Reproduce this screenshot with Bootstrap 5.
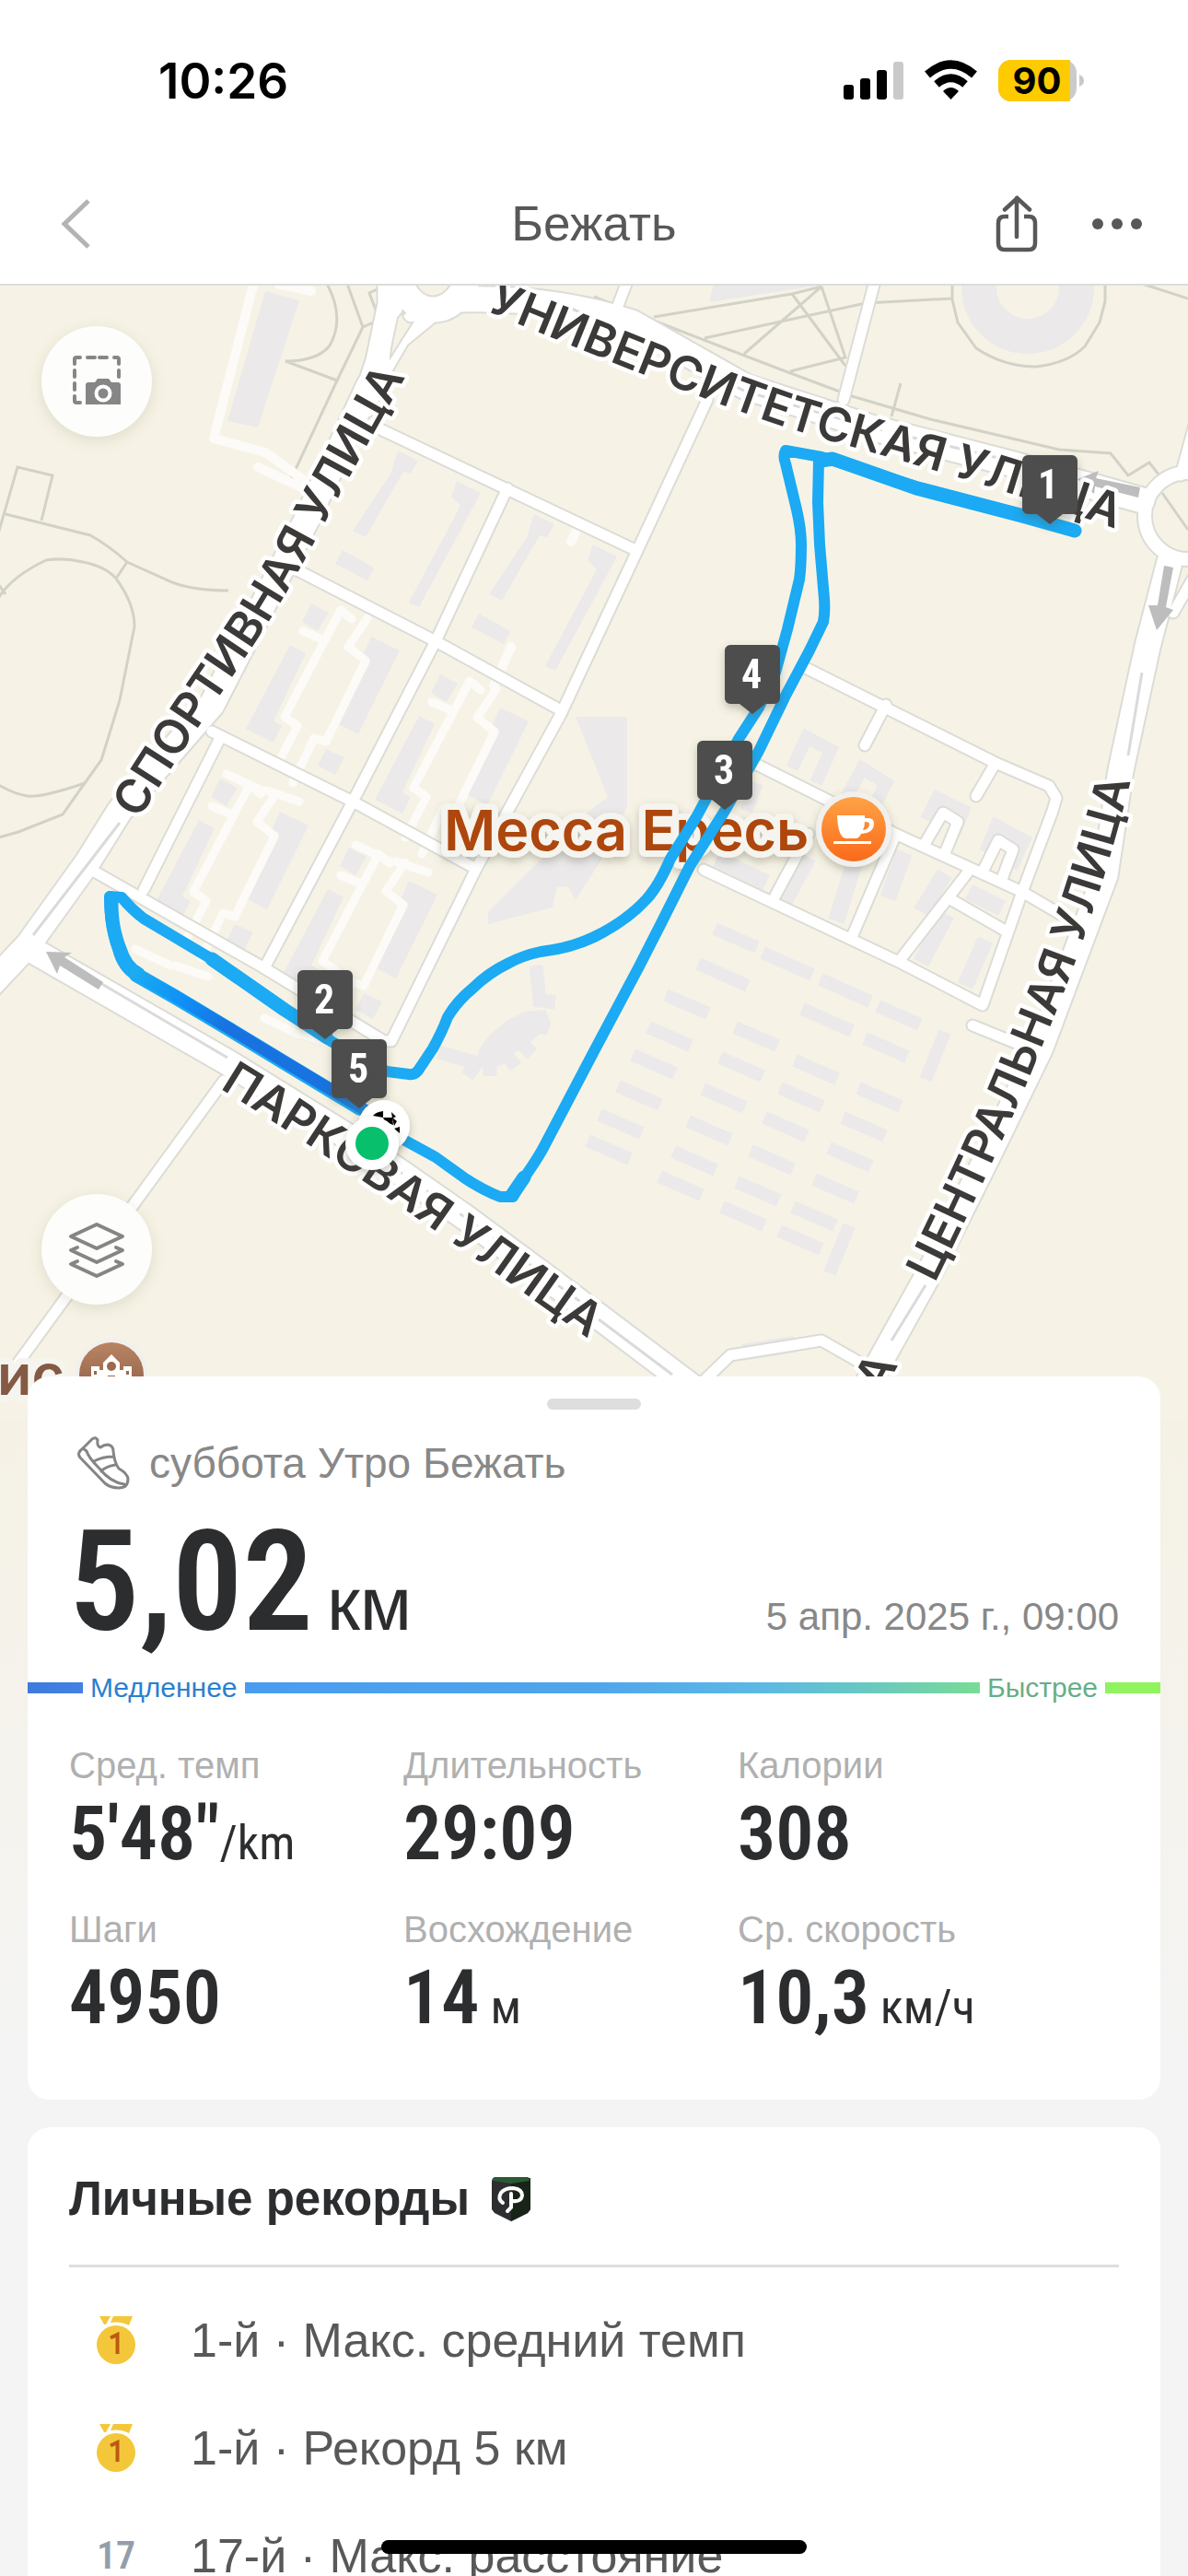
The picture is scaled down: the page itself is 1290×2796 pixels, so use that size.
<!DOCTYPE html>
<html lang="ru">
<head>
<meta charset="utf-8">
<meta name="viewport" content="width=device-width, initial-scale=1">
<title>Бежать</title>
<link href="https://cdn.jsdelivr.net/npm/bootstrap@5.3.0/dist/css/bootstrap.min.css" rel="stylesheet">
<style>
  body { font-family: "Liberation Sans", Arial, sans-serif; color: #2c2d2f; background: #f4f4f4; }
  .screen { height: 100vh; background: linear-gradient(#f5f1e4 0, #f5f1e4 54%, #f4f4f4 80%); }
  .status { height: 176px; padding: 0 112px 0 172px; }
  .clock { font: 600 53px/60px Inter, sans-serif; color: #000; }
  .topbar { height: 134px; padding: 2px 41px 0 58px; border-bottom: 2px solid #dcdcdc !important; }
  .topbar .btn { border: 0; line-height: 0; }
  .tools { gap: 42px; }
  .screen-title { font-size: 53px; line-height: 60px; color: #585858; }
  .map-svg { width: 100%; height: auto; }
  .map-btn { left: 45px; width: 120px; height: 120px; background: #fdfdfb; box-shadow: 0 4px 16px rgba(110,100,60,.16); }
  .map-btn:hover { background: #fff; }
  .map-btn-top { top: 44px; }
  .map-btn-low { bottom: 124px; }
  .sheets { margin: -46px 30px 0; gap: 30px; }
  .sheet { border: 0; border-radius: 24px; }
  .grip { width: 102px; height: 12px; border-radius: 6px; background: #dedede; margin-top: 24px; }
  .px { padding-left: 45px; padding-right: 45px; }
  .kind { font-size: 46px; line-height: 60px; color: #888; margin-top: 28px; gap: 21px; padding-left: 8px; }
  .cond { font-family: "Roboto Condensed", "Liberation Sans Narrow", "Arial Narrow", "Liberation Sans", sans-serif; font-weight: 600; }
  .total { font-size: 152px; line-height: 198px; }
  .total-unit { font-size: 82px; line-height: 80px; margin-left: 15px; }
  .when { font-size: 42px; line-height: 50px; color: #888; }
  .pace-bar { height: 12px; margin-top: 10px; background: linear-gradient(90deg, #3f7ade 0, #4a9cf0 20%, #50a6ec 50%, #5cb9e4 65%, #72d3a8 80%, #90f45f 96%); }
  .pace-bar span { font-size: 30px; line-height: 36px; padding: 0 8px; background: #fff; }
  .slow { color: #2a80cf; margin-left: 60px; }
  .fast { color: #67ae86; margin-right: 60px; }
  .stats { margin-top: 50px; padding-bottom: 65px; row-gap: 30px; }
  .stat { width: 363px; }
  .stat-name { font-size: 40px; line-height: 56px; color: #b0b0b0; font-weight: 400; }
  .stat-value { font-size: 82px; line-height: 92px; }
  .stat-unit { font-size: 52px; line-height: 50px; }
  .records-title { font-size: 51px; line-height: 60px; }
  .records-head { padding-top: 48px; padding-bottom: 41px; gap: 24px; }
  .sheet > .rule { margin: 0 45px; border-top: 3px solid #dedede; opacity: 1; }
  .records { padding-top: 20px; }
  .record { height: 117px; font-size: 52px; color: #585858; text-decoration: none; }
  .place { width: 72px; margin-left: 15px; margin-right: 45px; line-height: 0; }
  .place-num { font-size: 42px; line-height: 60px; color: #949eab; }
  .home { left: 50%; bottom: 24px; width: 462px; height: 15px; margin-left: -231px; border-radius: 8px; background: #000; }
  .lbl { font: 600 51px Inter, sans-serif; fill: #3c3a39; stroke: #fff; stroke-width: 9; paint-order: stroke; stroke-linejoin: round; }
  .poi { font: 600 61px Inter, sans-serif; stroke: #f6f4ee; stroke-width: 14; paint-order: stroke; stroke-linejoin: round; }
  .pin-n { font: 700 44px "Roboto Condensed", "Liberation Sans Narrow", "Liberation Sans", sans-serif; fill: #fff; text-anchor: middle; }
</style>
<script src="https://cdn.jsdelivr.net/npm/bootstrap@5.3.0/dist/js/bootstrap.bundle.min.js" defer></script>
</head>
<body>
<div class="screen overflow-hidden position-relative">
  <header class="bg-white">
    <div class="status d-flex justify-content-between align-items-center">
      <span class="clock">10:26</span>
      <svg width="262" height="46" viewBox="916 64 262 46" role="img" aria-label="Связь и батарея 90">
        <rect x="916" y="91" width="11" height="16" rx="3"/><rect x="934" y="84" width="11" height="23" rx="3"/><rect x="952" y="75" width="11" height="32" rx="3"/><rect x="970" y="66" width="11" height="41" rx="3" fill="#cacaca"/>
        <g fill="none" stroke="#000"><path d="M1007 80Q1032.500 58 1058 80" stroke-width="9"/><path d="M1017 90.500Q1032.500 77 1048 90.500" stroke-width="8.500"/></g>
        <path d="M1024 98Q1032.500 90 1041 98L1032.500 107Z"/>
        <rect x="1084" y="64" width="85" height="45" rx="14" fill="#cbcbcb"/><path d="M1098 64H1162V109H1098A14 14 0 0 1 1084 95V78A14 14 0 0 1 1098 64Z" fill="#fdcb00"/>
        <path d="M1172 80Q1177 82 1177 86.500T1172 93Z" fill="#c8c8c8"/>
        <text x="1126" y="101" text-anchor="middle" font-family="Inter, sans-serif" font-weight="700" font-size="40">90</text>
      </svg>
    </div>
    <nav class="topbar navbar flex-nowrap border-bottom position-relative justify-content-between">
      <button class="btn p-2" type="button" aria-label="Назад"><svg width="34" height="56" viewBox="0 0 34 56" fill="none" stroke="#b3b3b3" stroke-width="5"><path d="M30 3L4 28L30 53"/></svg></button>
      <h1 class="screen-title m-0 position-absolute start-50 translate-middle-x fw-normal">Бежать</h1>
      <div class="tools d-flex align-items-center">
        <button class="btn p-2" type="button" aria-label="Поделиться"><svg width="46" height="64" viewBox="1081 210 46 64" fill="none" stroke="#585858" stroke-width="4.500"><path d="M1095 234H1091Q1084 234 1084 241V263Q1084 270 1091 270H1117Q1124 270 1124 263V241Q1124 234 1117 234H1112"/><path d="M1104 256V214M1091 226.500L1104.500 214L1118 226.500" stroke-linecap="round"/></svg></button>
        <button class="btn p-2" type="button" aria-label="Ещё"><svg width="56" height="16" viewBox="0 0 56 16" fill="#585858"><circle cx="7" cy="8" r="6"/><circle cx="28" cy="8" r="6"/><circle cx="49" cy="8" r="6"/></svg></button>
      </div>
    </nav>
  </header>

  <section class="position-relative" aria-label="Карта маршрута">
    <svg class="map-svg d-block" viewBox="0 310 1290 1230">
      <defs>
        <linearGradient id="slowSeg" gradientUnits="userSpaceOnUse" x1="140" y1="1050" x2="400" y2="1210"><stop offset="0" stop-color="#1cb0f0"/><stop offset=".22" stop-color="#0f90f7"/><stop offset=".4" stop-color="#1873e0"/><stop offset=".85" stop-color="#1873e0"/><stop offset="1" stop-color="#1a8fe8"/></linearGradient>
        <linearGradient id="cafe" x1="0" y1="0" x2="0" y2="1"><stop offset="0" stop-color="#ffa245"/><stop offset="1" stop-color="#fa6a1a"/></linearGradient>
        <linearGradient id="school" x1="0" y1="0" x2="0" y2="1"><stop offset="0" stop-color="#b98463"/><stop offset="1" stop-color="#855840"/></linearGradient>
        <filter id="soft" x="-50%" y="-50%" width="200%" height="200%"><feDropShadow dx="0" dy="4" stdDeviation="5" flood-color="#554" flood-opacity=".35"/></filter>
        <path id="t1" d="M151 890C201 805 272 710 307 650S392 490 472 355"/>
        <path id="t2" d="M527 337C640 383 750 429 845 461C940 492 1080 523 1260 592"/>
        <path id="t3" d="M238 1181C380 1268 500 1355 680 1482"/>
        <path id="t4" d="M1015 1393C1060 1302 1100 1216 1150 1090C1180 1015 1205 940 1240 800"/>
        <path id="pin" d="M-30 -69A6 6 0 0 1 -24 -75H24A6 6 0 0 1 30 -69V-17A6 6 0 0 1 24 -11H14L0 0L-14 -11H-24A6 6 0 0 1 -30 -17Z"/>
        <g id="blk" fill="#ebe9ea"><path d="M315 700L332 709L297 783L306 788L297 806L267 791ZM403 691L434 706L389 797L368 786L402 719L393 713ZM338 655L357 665L345 685L328 675ZM354 813L374 822L364 841L345 831Z"/>
          <path fill="none" stroke="#fcfbf8" stroke-width="9" stroke-linecap="round" stroke-linejoin="round" d="M382 672L370 662L309 778L323 788L300 832M329 685L350 694M399 671L378 702L397 717L354 805L341 801L318 850M289 858L325 870M246 840L284 858"/></g>
        <g id="upr" fill="#ebe9ea"><path d="M432 489L454 500L446 514L438 512L397 583L383 576L424 514ZM496 522L522 535L455 659L444 654L500 549L490 539ZM372 597L406 616L399 630L364 612Z"/></g>
        <g id="roads" fill="none" stroke-linecap="round" stroke-linejoin="round">
          <path d="M411 465L690 597M321 618L473 696L609 771M230 794L383 870L517 943M99 944L284 1049L417 1130M768 434L690 602L609 775L517 943L425 1130L417 1130M551 530L473 696L383 870L288 1049M239 801L156 966M687 290L660 360M954 290L916 434"/>
          <path d="M875 725L1081 828L1139 853L1147 866L1143 880L1110 968L1067 1091L978 1045L764 944M962 765L939 809M1081 828L1060 864M822 830L970 904L1110 968L1151 992M878 905L842 972M970 912L925 1017M1050 948L978 1041M1032 976L1093 1011M1056 1113L1115 1137M1004 916L1024 882L1040 892L1026 926M1066 948L1084 912L1100 922L1088 954M764 1499L793 1471L892 1455L941 1483"/>
          <path d="M243 1173L-10 1520M31 1029L-20 1085M1300 450L1282 516M1300 620L1274 665"/>
        </g>
        <g id="mains" fill="none" stroke-linecap="round" stroke-linejoin="round">
          <path d="M-30 1090L31 1025L95 936L130 880L230 765L335 560L400 420L432 365L465 338M424 290L424 330L411 392L395 440"/>
          <path d="M430 290Q440 336 470 336T512 290"/><path d="M500 325Q600 322 686 350L810 420L949 465L1097 503L1240 543"/>
          <path d="M31 1029L247 1153L391 1242L506 1322L645 1425L760 1512"/>
          <path d="M1270 610L1246 702L1217 836L1200 950L1170 1030L1130 1137L1073 1254L1010 1380L935 1515"/>
        </g>
      </defs>
      <rect y="308" width="1290" height="1240" fill="#f6f3e6"/>
      <path fill="#ebe9ea" d="M288 316L325 326L280 464L247 457ZM775 308H900L770 328ZM625 778H681V875L655 930L625 977L617 962L605 963L600 985L530 1003V990L640 880L660 865Z"/>
      <circle cx="1116" cy="312" r="53" fill="none" stroke="#ebe9ea" stroke-width="38"/>
      <path fill="#ebe9ea" d="M520 1140L530 1125L550 1108L570 1098L592 1096L598 1110L580 1128L560 1142L545 1156L515 1160Z"/>
      <path fill="none" stroke="#ebe9ea" stroke-width="15" d="M520 1150L507 1168M532 1145V1168M546 1140L560 1158M562 1128L578 1144M575 1110L596 1117M582 1048L586 1086L603 1088M476 1142L515 1153"/>
      <use href="#upr"/><use href="#upr" x="148" y="69"/>
      <use href="#blk"/><use href="#blk" x="140" y="77"/><use href="#blk" x="-99" y="190"/><use href="#blk" x="41" y="265"/>
      <g fill="none" stroke="#ebe9ea">
        <path stroke-width="14" d="M776 1008l46 20M828 1034l54 24M891 1063l54 24M953 1092l46 20M758 1046l54 24M871 1095l54 24M939 1127l46 20M723 1080l46 20M798 1115l46 20M704 1115l46 20M782 1148l46 20M863 1151l46 20M687 1145l46 20M763 1182l46 20M847 1181l46 20M932 1181l46 20M671 1179l46 20M830 1213l46 20M915 1213l46 20M651 1210l46 20M747 1217l46 20M900 1246l46 20M638 1238l46 20M731 1250l46 20M815 1249l46 20M716 1277l46 20M884 1280l46 20M800 1283l46 20M784 1310l46 20M861 1310l46 20M846 1336l46 20M1026 1120L1005 1172M922 1330L901 1382"/>
        <path stroke-width="18" d="M806 1468L863 1459M778 932L832 958M878 930L852 978M928 935L908 1000M982 925L964 975M1026 948L1000 990M1052 968L1088 986M1028 992L1000 1045M1070 1020L1048 1070"/>
        <path stroke-width="14" d="M860 834L876 800L902 814L886 850M918 868L936 834L962 850L946 882M1006 890L1018 866L1046 880L1036 905M1070 925L1082 896L1112 912L1098 942M822 850L810 880"/>
      </g>
      <g fill="none" stroke="#d3d2c8" stroke-width="3">
        <path d="M355 308Q375 345 358 375Q345 392 310 392L366 413M377 308L394 355L412 347L401 318L414 312M394 355L366 413L316 520M-5 590L19 507L57 516L45 565M6 558L98 581Q118 592 138 610L187 632Q210 641 248 641M138 610L126 628"/>
        <path d="M-5 655Q8 628 50 608Q70 605 90 610Q115 615 126 628Q146 655 146 680L130 760L110 825L92 850L68 884L20 903L-5 910M-5 850Q15 862 30 864T92 850M-5 630L6 645"/>
        <path d="M645 322L710 348L845 400L925 430L1010 455L1150 488L1206 492L1225 516L1248 502L1262 520M710 344L860 319L892 311L808 384M765 367L940 329L1034 324M860 319L918 397M892 311L918 388L858 403M978 416L968 452M1034 308V325L1040 350L1060 378Q1090 398 1125 398Q1160 394 1178 376L1194 350L1200 327V308M1262 535L1290 575M1240 308L1290 324"/>
      </g>
      <path fill="none" stroke="#fcfbf8" stroke-width="10" stroke-linecap="round" stroke-linejoin="round" d="M276 305L232 476L288 491L337 526M280 507L329 530M302 308L338 316M555 702L536 745M626 576L620 588"/>
      <use href="#roads" stroke="#dcdcd6" stroke-width="15"/>
      <use href="#mains" stroke="#dcdcd6" stroke-width="31"/><circle cx="1290" cy="560" r="47" fill="none" stroke="#dcdcd6" stroke-width="18"/>
      <use href="#roads" stroke="#fff" stroke-width="11"/>
      <use href="#mains" stroke="#fff" stroke-width="27"/><circle cx="1290" cy="560" r="47" fill="none" stroke="#fff" stroke-width="14"/>
      <path d="M432 345Q424 380 424 388L448 350Q440 352 436 340Z" fill="#f6f3e6" stroke="#dcdcd6" stroke-width="2"/>
      <path fill="none" stroke="#dadada" stroke-width="3" d="M130 893L36 1015M80 1050L247 1148M650 1432L730 1492M1240 730L1225 820M1005 1395L968 1455"/>
      <path fill="none" stroke="#dadada" stroke-width="3" stroke-dasharray="12 10" d="M391 1242L506 1322L640 1420M600 325L810 425L949 465L1160 515"/>
      <g fill="#bdbdbd"><path d="M1238 529L1190 519L1193 511L1170 520L1188 536L1189 528L1236 540ZM1264 614L1257 657L1247 657L1256 684L1274 662L1266 659L1274 616ZM112 1066L70 1039L78 1034L50 1033L62 1057L65 1048L107 1074Z"/></g>

      <text class="lbl"><textPath href="#t1">СПОРТИВНАЯ УЛИЦА</textPath></text>
      <text class="lbl"><textPath href="#t2">УНИВЕРСИТЕТСКАЯ УЛИЦА</textPath></text>
      <text class="lbl"><textPath href="#t3">ПАРКОВАЯ УЛИЦА</textPath></text>
      <text class="lbl"><textPath href="#t4">ЦЕНТРАЛЬНАЯ УЛИЦА</textPath></text>
      <text class="lbl" transform="translate(958 1514) rotate(-62)">А</text>
      <text class="poi" x="482" y="923" fill="#ad470f" filter="url(#soft)">Месса Ересь</text>
      <g transform="translate(927 900)"><circle r="41" fill="#f2f0ec" filter="url(#soft)"/><circle r="35" fill="url(#cafe)"/><path d="M-18 -15H12V-12H16Q22 -12 22 -6Q22 4 8 5Q6 10 2 10H-8Q-17 10 -18 -15ZM12 -8Q12 -3 10 1Q17 0 17 -6Q17 -8 12 -8ZM-22 13H19V16H-22Z" fill="#fff" fill-rule="evenodd"/></g>
      <text class="poi" x="70" y="1514" text-anchor="end" fill="#845a45">ис</text>
      <g transform="translate(121 1492)"><circle r="40" fill="#f2f0ec"/><circle r="35" fill="url(#school)"/><path d="M-22 20V-9H-13V-5H-9V-13L0 -22L9 -13V-5H13V-9H22V20Z" fill="#fff"/><circle cy="-9" r="5" fill="#9a6a4e"/><path d="M-19 -4h3v4h-3zM16 -4h3v4h-3zM-19 5h3v4h-3zM16 5h3v4h-3zM-4 1h8v8h-8z" fill="#9a6a4e"/></g>

      <g fill="none" stroke="#1baaf3" stroke-width="12" stroke-linecap="round" stroke-linejoin="round">
        <path d="M404 1215L440 1238L473 1256L505 1279Q525 1292 543 1299H557L568 1280Q585 1256 592 1242L645 1141L694 1049L719 1000L749 940L787 880L824 815L853 755L879 706L894 675Q896 665 895 650L890 591L888 545L889 500"/>
        <path d="M1167 576L1110 558L995 528L892 496L853 489Q850 495 853 503L865 553Q870 575 870 591Q870 615 868 629L855 683L842 730L824 768L802 802L756 887L728 932Q715 962 702 976Q680 1000 645 1017Q620 1029 587 1033Q568 1037 553 1045Q530 1056 513 1073Q496 1087 486 1104Q480 1120 470 1138L454 1162Q450 1167 444 1166L420 1163L385 1145L354 1127L309 1097L230 1041L156 997Q144 988 132 974L119 973Q119 1005 128 1030Q133 1050 148 1059L190 1083"/>
        <path stroke-width="15" d="M1167 576L1110 560L995 530L904 498L892 500M556 1297L569 1278M230 1041L309 1096L354 1125M121 975Q120 1005 130 1030Q136 1050 150 1057"/>
      </g>
      <path d="M148 1058L190 1082L247 1116L313 1156L391 1203" fill="none" stroke="#1baaf3" stroke-width="16" stroke-linecap="round"/>
      <path d="M148 1057L190 1081L247 1115L313 1155L400 1207" fill="none" stroke="url(#slowSeg)" stroke-width="13" stroke-linecap="round"/>

      <g fill="#4d4d4d" filter="url(#soft)"><use href="#pin" x="1140" y="569"/><use href="#pin" x="817" y="775"/><use href="#pin" x="787" y="879"/><use href="#pin" x="353" y="1128"/><use href="#pin" x="390" y="1203"/></g>
      <g class="pin-n"><text x="1138" y="541">1</text><text x="816" y="747">4</text><text x="786" y="851">3</text><text x="352" y="1100">2</text><text x="389" y="1175">5</text></g>
      <circle cx="417" cy="1222" r="28" fill="#fff" filter="url(#soft)"/>
      <path d="M405 1211Q408 1207 416 1206L416 1213L405 1211ZM416 1213L426 1213L427 1221L418 1218ZM425 1207L430 1212L426 1214ZM428 1225L434 1223V1230ZM426 1213L431 1217L428 1222Z" fill="#000"/>
      <circle cx="404" cy="1241" r="29" fill="#fff" filter="url(#soft)"/><circle cx="404" cy="1241" r="18" fill="#08bf6b"/>
    </svg>
    <button class="map-btn map-btn-top btn rounded-circle position-absolute p-0" type="button" aria-label="Снимок карты">
      <svg width="54" height="58" viewBox="78 386 54 58"><path d="M81 396V391Q81 389 83 389H87M95 389H103M108 389H116M124 389H127Q129 389 129 391V396M129 403V410M81 403V410M81 417V424M81 431V436Q81 438 83 438H87" fill="none" stroke="#868686" stroke-width="4" stroke-linecap="round"/><path d="M93 419Q93 416 96 416H103L106 412H118L121 416H128Q131 416 131 419V440H93Z" fill="#868686"/><circle cx="112" cy="428" r="7.500" fill="none" stroke="#fff" stroke-width="4"/></svg>
    </button>
    <button class="map-btn map-btn-low btn rounded-circle position-absolute p-0" type="button" aria-label="Слои карты">
      <svg width="64" height="64" viewBox="73 1324 64 64" fill="none" stroke="#858585" stroke-width="4" stroke-linejoin="round" stroke-linecap="round"><path d="M105 1329L133 1342L105 1355L77 1342ZM84 1354L77 1357L105 1370L133 1357L126 1354M84 1369L77 1372L105 1385L133 1372L126 1369"/></svg>
    </button>
  </section>

  <main class="sheets d-flex flex-column position-relative">
    <article class="sheet card">
      <div class="grip mx-auto"></div>
      <div class="px d-flex flex-column">
        <div class="kind d-flex align-items-center">
          <svg width="58" height="58" viewBox="0 0 58 58" fill="none" stroke="#858585" stroke-width="3" stroke-linejoin="round" stroke-linecap="round"><path d="M7 13L17 3Q21 0 23 4Q22 11 26 12Q30 9 34 9Q40 10 40 16Q41 28 46 35Q55 40 56 46Q56 56 46 56Q37 56 31 51L4 23Q0 18 7 13L11 16Q13 23 25 35Q37 50 52 52M19 27Q28 22 41 22M27 38Q31 33 42 31"/></svg>
          <span>суббота Утро Бежать</span>
        </div>
        <div class="d-flex justify-content-between align-items-baseline">
          <div><span class="cond total">5,02</span><span class="total-unit">км</span></div>
          <time class="when" datetime="2025-04-05T09:00">5 апр. 2025 г., 09:00</time>
        </div>
      </div>
      <div class="pace-bar d-flex justify-content-between align-items-center"><span class="slow">Медленнее</span><span class="fast">Быстрее</span></div>
      <dl class="stats px d-flex flex-wrap mb-0">
        <div class="stat"><dt class="stat-name">Сред. темп</dt><dd class="stat-value cond m-0">5'48"<span class="stat-unit fw-normal">/km</span></dd></div>
        <div class="stat"><dt class="stat-name">Длительность</dt><dd class="stat-value cond m-0">29:09</dd></div>
        <div class="stat"><dt class="stat-name">Калории</dt><dd class="stat-value cond m-0">308</dd></div>
        <div class="stat"><dt class="stat-name">Шаги</dt><dd class="stat-value cond m-0">4950</dd></div>
        <div class="stat"><dt class="stat-name">Восхождение</dt><dd class="stat-value cond m-0">14<span class="stat-unit fw-normal"> м</span></dd></div>
        <div class="stat"><dt class="stat-name">Ср. скорость</dt><dd class="stat-value cond m-0">10,3<span class="stat-unit fw-normal"> км/ч</span></dd></div>
      </dl>
    </article>
    <article class="sheet card">
      <div class="records-head px d-flex align-items-center">
        <h2 class="records-title m-0 fw-bold">Личные рекорды</h2>
        <svg width="42" height="48" viewBox="0 0 42 48"><path d="M5 0H37Q42 0 42 5V35L39 39L21 48L3 39L0 35V5Q0 0 5 0Z" fill="#2c2e2f"/><path d="M21 5L42 1V35L39 39L21 48Z" fill="#182417"/><path d="M5 0H37Q41 0 41 4L21 7L1 4Q1 0 5 0Z" fill="#2b5a36"/><path d="M12 28Q6 24 10 17Q14 12 23 12Q33 13 33 20Q32 27 23 26M21 18V33L17 37" fill="none" stroke="#fff" stroke-width="4" stroke-linecap="round"/></svg>
      </div>
      <hr class="rule">
      <div class="records px d-flex flex-column">
        <a class="record d-flex align-items-center" href="#"><span class="place text-center"><svg width="42" height="52" viewBox="0 0 42 52"><path d="M3 0H15L10 9H8ZM18 0H39L35 10Q26 5 15 7Z" fill="#f4c73b"/><circle cx="21" cy="31" r="21" fill="#f4c73b"/><path d="M15 23.500L22.500 20V41" fill="none" stroke="#bb5a12" stroke-width="4"/></svg></span>1-й · Макс. средний темп</a>
        <a class="record d-flex align-items-center" href="#"><span class="place text-center"><svg width="42" height="52" viewBox="0 0 42 52"><path d="M3 0H15L10 9H8ZM18 0H39L35 10Q26 5 15 7Z" fill="#f4c73b"/><circle cx="21" cy="31" r="21" fill="#f4c73b"/><path d="M15 23.500L22.500 20V41" fill="none" stroke="#bb5a12" stroke-width="4"/></svg></span>1-й · Рекорд 5 км</a>
        <a class="record d-flex align-items-center" href="#"><span class="place place-num cond text-center">17</span>17-й · Макс. расстояние</a>
      </div>
    </article>
  </main>
  <div class="home position-fixed"></div>
</div>
</body>
</html>
